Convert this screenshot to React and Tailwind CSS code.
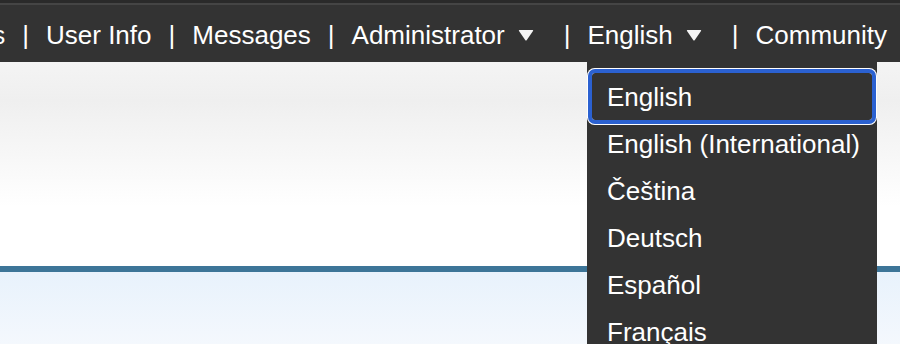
import React from "react";

const navItems = [
  { label: "User Info" },
  { label: "Messages" },
  { label: "Administrator", menu: true },
  { label: "English", menu: true },
  { label: "Community" },
];

const languages = [
  "English",
  "English (International)",
  "Čeština",
  "Deutsch",
  "Español",
  "Français",
  "Italiano",
];

const Caret = () => (
  <svg width="16" height="12" viewBox="0 0 16 12" className="ml-[13px] mr-[13px] shrink-0">
    <path d="M1.5 1 H14.5 Q15.6 1 15 2 L8.8 11 Q8 12 7.2 11 L1 2 Q0.4 1 1.5 1 Z" fill="#f4f4f4" />
  </svg>
);

const Separator = () => <span className="px-[17px]">|</span>;

const NavBar = () => {
  return (
    <div>
      <div className="h-[3px] bg-[#2a2a2a]"></div>
      <div className="h-[2px] bg-[#454545]"></div>
      <div className="h-[57px] bg-[#333333] flex items-center pt-[3px] overflow-hidden whitespace-nowrap text-white text-[26px] leading-[30px]">
        <span className="ml-[-80px]">Groups</span>
        {navItems.map((item) => (
          <React.Fragment key={item.label}>
            <Separator />
            <span className="flex items-center">
              {item.label}
              {item.menu && <Caret />}
            </span>
          </React.Fragment>
        ))}
      </div>
    </div>
  );
};

const LanguageMenu = () => {
  return (
    <div className="absolute left-[587px] top-[62px] w-[290px] h-[300px] bg-[#333333] pt-[11px] text-white text-[26px] leading-[30px] whitespace-nowrap">
      {languages.map((lang, index) => (
        <div
          key={lang}
          className={
            index === 0
              ? "mx-[5px] h-[47px] flex items-center pl-[15px] rounded-[3px] shadow-[0_0_0_4px_#2b61d1,0_0_0_5px_#ffffff]"
              : "h-[47px] flex items-center pl-[20px]"
          }
        >
          {lang}
        </div>
      ))}
    </div>
  );
};

export default function App() {
  return (
    <div
      className="relative h-[344px] w-[900px] overflow-hidden bg-white"
      style={{ fontFamily: '"Liberation Sans", Arial, sans-serif' }}
    >
      <NavBar />
      <div className="h-[204px] bg-[linear-gradient(to_bottom,#f4f4f4_0%,#efefef_19%,#ffffff_71%,#ffffff_100%)]"></div>
      <div className="h-[6px] bg-[#3d7598]"></div>
      <div className="h-[72px] bg-[linear-gradient(to_bottom,#e8f2fc,#f4f8fd)]"></div>
      <LanguageMenu />
    </div>
  );
}
